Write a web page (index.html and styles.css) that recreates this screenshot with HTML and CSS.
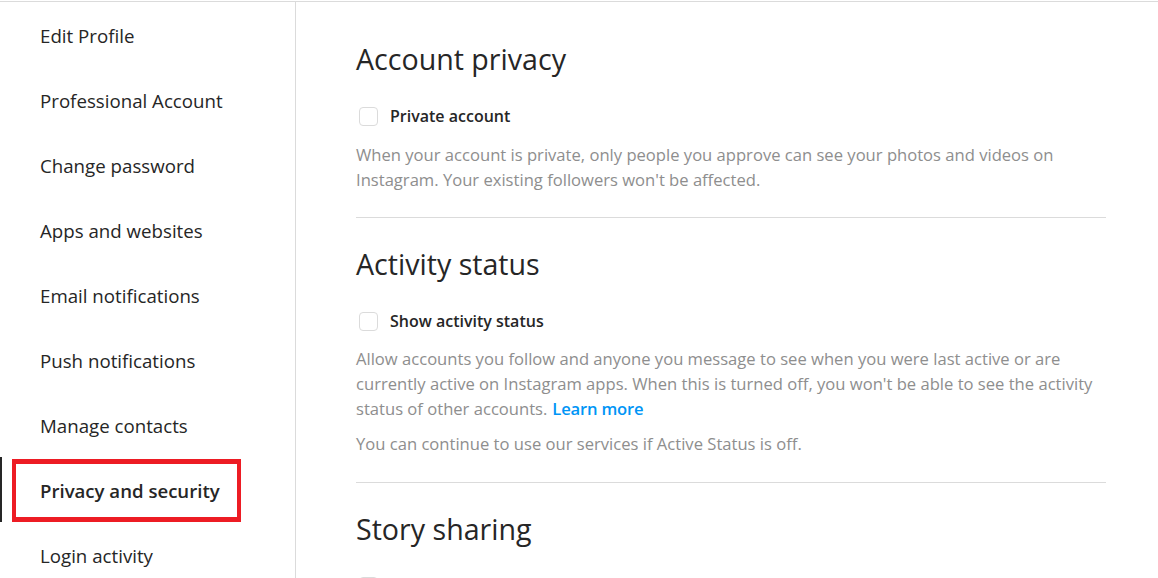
FILE: index.html
```html
<!DOCTYPE html>
<html lang="en">
<head>
<meta charset="utf-8">
<title>Privacy and security</title>
<link rel="stylesheet" href="styles.css">
</head>
<body>
<div class="page">
  <nav class="sidebar">
    <a class="nav-item">Edit Profile</a>
    <a class="nav-item">Professional Account</a>
    <a class="nav-item">Change password</a>
    <a class="nav-item">Apps and websites</a>
    <a class="nav-item">Email notifications</a>
    <a class="nav-item">Push notifications</a>
    <a class="nav-item">Manage contacts</a>
    <a class="nav-item active">Privacy and security<span class="highlight"></span></a>
    <a class="nav-item">Login activity</a>
  </nav>
  <main class="content">
    <section class="section section-first">
      <h2 class="section-title">Account privacy</h2>
      <label class="check-row"><span class="checkbox"></span><span class="check-label">Private account</span></label>
      <p class="desc">When your account is private, only people you approve can see your photos and videos on Instagram. Your existing followers won't be affected.</p>
    </section>
    <section class="section">
      <h2 class="section-title">Activity status</h2>
      <label class="check-row"><span class="checkbox"></span><span class="check-label">Show activity status</span></label>
      <p class="desc">Allow accounts you follow and anyone you message to see when you were last active or are currently active on Instagram apps. When this is turned off, you won't be able to see the activity status of other accounts.<span class="link">Learn more</span></p>
      <p class="desc desc-extra">You can continue to use our services if Active Status is off.</p>
    </section>
    <section class="section">
      <h2 class="section-title">Story sharing</h2>
      <div class="check-row"><span class="checkbox"></span></div>
    </section>
  </main>
</div>
</body>
</html>
```
FILE: styles.css
```css
html, body {
  margin: 0;
  padding: 0;
  background: #fff;
  overflow: hidden;
}
body {
  font-family: "Open Sans", "Noto Sans", sans-serif;
  color: #262626;
}
.page {
  display: flex;
  margin-top: 1px;
  border-top: 1px solid #dbdbdb;
  height: 576px;
}
.sidebar {
  width: 295px;
  flex: none;
  border-right: 1px solid #dbdbdb;
  display: flex;
  flex-direction: column;
}
.nav-item {
  position: relative;
  display: flex;
  align-items: center;
  height: 65px;
  flex: none;
  box-sizing: border-box;
  padding: 2px 0 0 38px;
  font-size: 18.7px;
  color: #262626;
  border-left: 2px solid transparent;
}
.nav-item.active {
  border-left-color: #262626;
  font-weight: 600;
  font-size: 18.6px;
}
.highlight {
  position: absolute;
  left: 10px;
  top: 2px;
  width: 229px;
  height: 63px;
  box-sizing: border-box;
  border: 4px solid #ed1c24;
  border-top-width: 5px;
  border-bottom-width: 5px;
}
.content {
  flex: 1;
  padding: 11px 52px 0 60px;
}
.section {
  padding: 28px 0 26px;
  border-bottom: 1px solid #dbdbdb;
}
.section-first {
  padding-bottom: 25px;
}
.section-first .desc {
  margin-top: 14px;
}
.section:last-child {
  border-bottom: none;
}
.section-title {
  margin: 0;
  font-size: 28.6px;
  line-height: 36px;
  font-weight: 400;
}
.check-row {
  display: flex;
  align-items: center;
  height: 24px;
  margin-top: 27px;
  padding-left: 3px;
}
.checkbox {
  width: 19px;
  height: 19px;
  box-sizing: border-box;
  border: 1px solid #dbdbdb;
  border-radius: 4px;
  margin-right: 12px;
}
.check-label {
  font-size: 16px;
  font-weight: 600;
}
.desc {
  margin: 13px 0 0;
  font-size: 16.6px;
  line-height: 25px;
  color: #8e8e8e;
}
.desc-extra {
  margin-top: 10px;
}
.link {
  color: #0095f6;
  font-weight: 600;
  letter-spacing: -0.2px;
  margin-left: 5px;
}
```
